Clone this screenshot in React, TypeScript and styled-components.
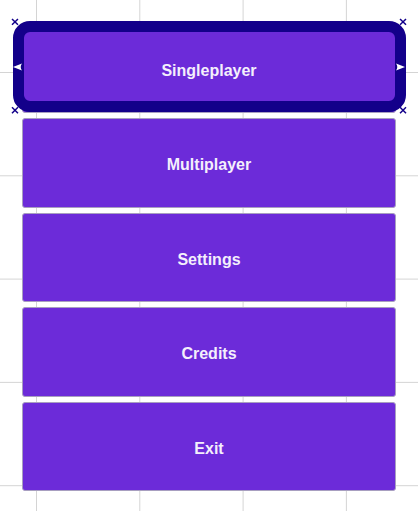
import React from "react";
import styled, { createGlobalStyle } from "styled-components";

const GlobalStyle = createGlobalStyle`
  html, body {
    margin: 0;
    padding: 0;
  }
  body {
    width: 418px;
    height: 511px;
    overflow: hidden;
    background-color: #ffffff;
    background-image:
      linear-gradient(to right, #d4d4d4 1px, transparent 1px),
      linear-gradient(to bottom, #d4d4d4 1px, transparent 1px);
    background-size: 103.3px 103.3px;
    background-position: 36px 72px;
    font-family: "Liberation Sans", Arial, sans-serif;
  }
`;

const Menu = styled.div`
  display: flex;
  flex-direction: column;
  gap: 5px;
  padding: 23.5px 22px 0 22px;
  width: 374px;
`;

const MenuButton = styled.button`
  position: relative;
  height: 89.5px;
  width: 100%;
  display: flex;
  align-items: center;
  justify-content: center;
  background: #6c2bd9;
  border: 1px solid #a89fc0;
  border-radius: 3px;
  color: #f4effc;
  font-family: "Liberation Sans", Arial, sans-serif;
  font-weight: 700;
  font-size: 16px;
  padding: 5px 0 0;
  cursor: pointer;
`;

/* selection gizmo drawn over the focused button */
const SelectFrame = styled.div`
  position: absolute;
  top: -3.5px;
  bottom: 0;
  left: -10px;
  right: -11px;
  border: 11px solid #13008a;
  border-radius: 17px;
  pointer-events: none;
`;

const Handles = styled.svg`
  position: absolute;
  top: -11px;
  left: -11px;
  right: -11px;
  bottom: -11px;
  width: calc(100% + 22px);
  height: calc(100% + 22px);
  overflow: visible;
  pointer-events: none;
`;

const Gizmo = () => (
  <>
    <SelectFrame />
    <Handles viewBox="0 0 396 111.5" preserveAspectRatio="none">
      <g stroke="#13008a" strokeWidth="1.5">
        <path d="M0 5 L6 11 M6 5 L0 11" />
        <path d="M390 5 L396 11 M396 5 L390 11" />
        <path d="M0 95 L6 101 M6 95 L0 101" />
        <path d="M390 95 L396 101 M396 95 L390 101" />
      </g>
      <path d="M1 54 L10 50.5 Q7.5 54 10 57.5 Z" fill="#ffffff" />
      <path d="M395 54 L386 50.5 Q388.5 54 386 57.5 Z" fill="#ffffff" />
    </Handles>
  </>
);

const items = ["Singleplayer", "Multiplayer", "Settings", "Credits", "Exit"];

export default function App() {
  return (
    <>
      <GlobalStyle />
      <Menu>
        {items.map((item, idx) => (
          <MenuButton key={item}>
            {idx === 0 && <Gizmo />}
            {item}
          </MenuButton>
        ))}
      </Menu>
    </>
  );
}
